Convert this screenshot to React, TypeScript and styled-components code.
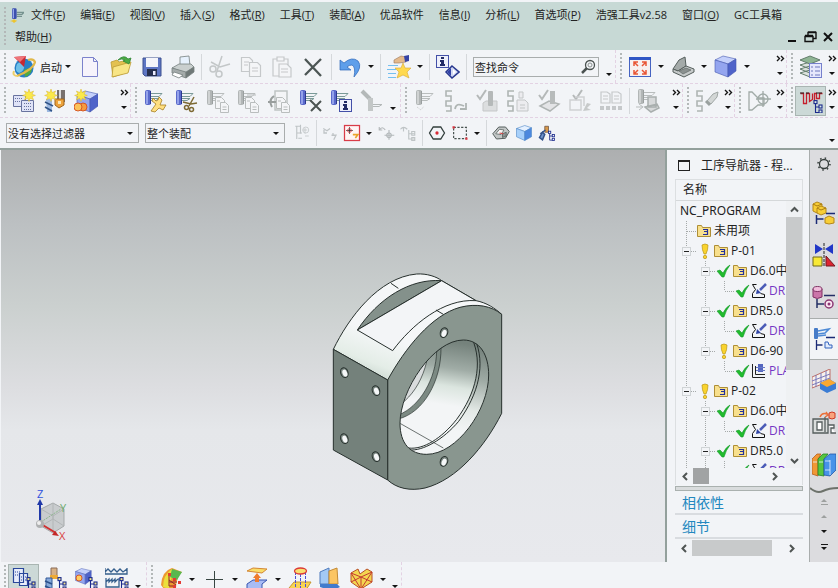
import React from "react";
import styled, { createGlobalStyle, css } from "styled-components";

const GlobalStyle = createGlobalStyle`
  * { box-sizing: border-box; }
  html, body { margin: 0; height: 100%; overflow: hidden; }
  body, button, input, select {
    font-family: "Open Sans", "Noto Sans CJK SC", sans-serif;
    font-size: 11px;
    color: #222;
  }
  button { border: 0; padding: 0; background: none; }
`;

/* ---------- Icon drawings (24 x 24 unless noted) ---------- */

const Burst = ({ x = 0, y = 0 }: { x?: number; y?: number }) => (
  <path
    transform={`translate(${x} ${y})`}
    d="M6 0l1.2 3.6L10.6 2 9 5.2l3.4 1.2L9 7.600l1.600 3.200-3.400-1.600L6 12.600 4.800 9.200 1.400 10.800 3 7.600-.4 6.400 3 5.200 1.400 2l3.400 1.600z"
    fill="#fbe94a"
    stroke="#d8b733"
    strokeWidth=".5"
  />
);

const NavTree = ({ x = 0, y = 0, c = "#1b2a8c", f = "#f6e58a" }: { x?: number; y?: number; c?: string; f?: string }) => (
  <g transform={`translate(${x} ${y})`} stroke={c} strokeWidth="1.1" fill={f}>
    <path d="M2.500 4v8.500H6M2.500 7H6" fill="none" />
    <rect x="1" y="0.600" width="3" height="3" />
    <rect x="6" y="5" width="3" height="3" />
    <rect x="6" y="10" width="3" height="3" />
  </g>
);

const Op = ({ grey, x = 0, y = 0 }: { grey?: boolean; x?: number; y?: number }) => (
  <g transform={`translate(${x} ${y})`}>
    <path d="M8 4.500h11l-3 3H8M8 9.500h8l-3 2H8" fill="none" stroke={grey ? "#b9bdbd" : "#7a9a98"} />
    <rect x="2" y="1" width="6" height="15" rx="2" fill={grey ? "#b2b6b6" : "#5a6acb"} />
    <path d="M4 2v13" stroke={grey ? "#d9dbdb" : "#a9b6f4"} strokeWidth="1.500" />
    <path d="M7.500 2v13" stroke={grey ? "#9a9f9f" : "#2c3890"} />
  </g>
);

const Sheets = ({ x = 0, y = 0, s = "#b9bdbd" }: { x?: number; y?: number; s?: string }) => (
  <g transform={`translate(${x} ${y})`} fill="#f4f5f7" stroke={s}>
    <path d="M.5.500h6l3 3v8h-9z" />
    <path d="M5.500 5.500h5l3 3v7h-8z" />
    <path d="M7.500 10h4M7.500 12.500h4M2 4h3" />
  </g>
);

const Scissors = ({ c, x = 0, y = 0 }: { c: string; x?: number; y?: number }) => (
  <g transform={`translate(${x} ${y})`} fill="none" stroke={c} strokeWidth="1.500">
    <path d="M11 0L6 9M0 5l8 2 6-1" />
    <circle cx="3.500" cy="10.500" r="2" />
    <circle cx="8.500" cy="12.500" r="2" />
  </g>
);

const Cross = ({ x = 0, y = 0, s = 12 }: { x?: number; y?: number; s?: number }) => (
  <path transform={`translate(${x} ${y})`} d={`M0 0L${s} ${s}M${s} 1L1 ${s}`} stroke="#4c5452" strokeWidth="2" />
);

const Serpent = () => <path d="M8 2H2v5h5v5H2v5h5v5H2" fill="none" stroke="#aeb5b3" strokeWidth="1.600" />;

const BlueCube = ({ x = 0, y = 0 }: { x?: number; y?: number }) => (
  <g transform={`translate(${x} ${y})`} stroke="#4457ae" strokeWidth=".6">
    <path d="M1 5l8-4 13 3-8 5z" fill="#c4d0fb" />
    <path d="M1 5l13 4v13L1 17z" fill="#94a5ef" />
    <path d="M14 9l8-5v12l-8 6z" fill="#4f63c9" />
  </g>
);

const Info = ({ x = 0, y = 0 }: { x?: number; y?: number }) => (
  <g transform={`translate(${x} ${y})`}>
    <rect x=".5" y=".5" width="12" height="12" fill="#eef0fb" stroke="#4350a8" />
    <path d="M5 2h3v2H5zM4 5h4v4h1v2H4V9h1V7H4z" fill="#222b66" />
  </g>
);

const Tick = ({ x = 0, y = 0 }: { x?: number; y?: number }) => (
  <path transform={`translate(${x} ${y})`} d="M1 5l3 4 6-9" stroke="#b5b9b9" strokeWidth="2" fill="none" />
);

const icons: Record<string, React.ReactNode> = {
  logo: (
    <g>
      <path d="M13 8h11l-3 3h-8M13 14h8" stroke="#75928f" strokeWidth="2" fill="none" />
      <rect x="6" y="2" width="7" height="16" rx="2" fill="#3c50ae" />
      <path d="M8 3v14" stroke="#96a6ea" strokeWidth="2" />
      <path d="M9 18l2 2 3 .5-2.500 1.500L9 24l-2-2-4-1 4-1z" fill="#eec52d" />
    </g>
  ),
  globe: (
    <g>
      <circle cx="12" cy="13" r="9.500" fill="#277fc5" />
      <path d="M5 9q6-5 7 1t-5 8q-5-2-2-9" fill="#6fc0e8" />
      <path d="M12 15q5-3 8-1-1 6-7 8z" fill="#54aa40" />
      <path d="M5 21Q22 14 23 7q-2-4-7-2" fill="none" stroke="#e0b84a" strokeWidth="2.200" />
      <path d="M2 16q-2 5 4 5" fill="none" stroke="#edcf68" strokeWidth="2" />
      <path d="M2 2l12-1-2 11z" fill="#c72832" />
      <path d="M2 2l12-1-6 6z" fill="#ef7479" />
    </g>
  ),
  fresh: <path d="M4.500 2.500h11l4 4v15h-15zM15.500 2.500v4h4" fill="#f6f3fb" stroke="#7c82cc" />,
  open: (
    <g stroke="#bb9a34" strokeWidth=".8">
      <path d="M2 7l6-2 2 2 9-2v12L4 22z" fill="#e3c150" />
      <path d="M4 12l18-5-3 11L3 22z" fill="#f8e586" />
      <path d="M9 5q6-6 10-1l3-1-2 6-6-3 2-1q-3-2-7 0" fill="#4cab45" stroke="#2e8533" />
    </g>
  ),
  save: (
    <g>
      <path d="M3 3h18v18H5l-2-2z" fill="#5e76c4" stroke="#3c508f" />
      <path d="M6 3h12v9H6z" fill="#f4f5fb" />
      <path d="M7 14h10v7H7z" fill="#27304e" />
      <path d="M13 16h2.500v4H13z" fill="#eef" />
    </g>
  ),
  print: (
    <g stroke="#76807f" strokeWidth=".8">
      <path d="M9 2l9-1 1 10-10 2z" fill="#e7f2fd" />
      <path d="M1 13l7-4h12l3 3-8 6z" fill="#c9cfce" />
      <path d="M1 13l14 4v6L1 18z" fill="#a4abaa" />
      <path d="M15 17l8-5v5l-8 6z" fill="#6f7877" />
      <path d="M3 17l9 3-4 3-7-3z" fill="#fff" />
    </g>
  ),
  cut: (
    <g fill="none" stroke="#c3c7c8" strokeWidth="1.500">
      <path d="M14 1l-4 12-1 3M3 7l9 5 10-3" />
      <circle cx="5" cy="14" r="3" />
      <circle cx="11" cy="19" r="3" />
    </g>
  ),
  copy: (
    <g fill="#f4f5f7" stroke="#c5c8ca" strokeWidth="1.200">
      <path d="M2.500 2.500h8l3 3v11h-11z" />
      <path d="M10.500 7.500h8l3 3v11h-11zM13 13h6M13 16h6M5 7h5M5 10h4" />
    </g>
  ),
  paste: (
    <g fill="#f4f5f7" stroke="#c5c8ca" strokeWidth="1.200">
      <path d="M3 4h15v17H3z" />
      <path d="M7 2h7v4H7zM9 9h8l4 4v9H9zM11 14h7M11 17h7" />
    </g>
  ),
  remove: <path d="M4 4l16 17M20 4L4 20" stroke="#4c5654" strokeWidth="2.300" />,
  undo: (
    <path d="M2 15V5l4 3q8-7 14-2 5 6-4 16 2-10-2-12-3 0-5 2l4 3z" fill="#5f9fea" stroke="#2c66b8" strokeWidth=".7" />
  ),
  starHand: (
    <g>
      <path d="M1 10.500h10M0 14.500h9M1 18.500h8M1 22.500h8" stroke="#75bff0" />
      <path d="M7 5l7-4 5 1v5l-7 1-5 0z" fill="#e4ba8c" stroke="#9b765a" strokeWidth=".6" />
      <path d="M17 1l5-1v6l-4 1z" fill="#3744a5" />
      <path d="M16 8l2 5 6 0-4 4 2 6-6-3-6 3 2-6-4-4h6z" fill="#ffd94f" stroke="#d8a832" strokeWidth=".6" />
    </g>
  ),
  command: (
    <g>
      <Info />
      <path d="M16 11l7 6-7 6-6-6z" fill="#d1d8f3" stroke="#27378e" strokeWidth="1.500" />
      <path d="M15 13v8l-4-4z" fill="#3142a6" />
      <path d="M17 14v6l3-3z" fill="#fff" />
    </g>
  ),
  fit: (
    <g>
      <rect x="1.500" y="2.500" width="21" height="19" fill="#f7f0ef" stroke="#4563c1" />
      <path d="M1 2h22v3H1z" fill="#3157c5" />
      <path d="M10 11L6 7m0 4V7h4M14 11l4-4m-4 0h4v4M10 15l-4 4m0-4v4h4M14 15l4 4m-4 0h4v-4" stroke="#e95535" fill="none" strokeWidth="1.500" />
    </g>
  ),
  shell: (
    <g stroke="#555e5c">
      <path d="M2 14L8 5l6-3 1 9-8 5z" fill="#a4aaa9" />
      <path d="M2 14l5 2 8-5 8 3v3l-10 5-11-5z" fill="#c6caca" />
      <path d="M8 16l7-3 5 2-8 4z" fill="#8b9190" strokeWidth=".6" />
    </g>
  ),
  cube: <BlueCube />,
  layers: (
    <g stroke="#637d6c">
      <path d="M1 18l10-3 10 3-10 4zM1 14l10-3 10 3-10 4zM1 10l10-3 10 3-10 4z" fill="#dce2dd" />
      <path d="M1 5l10-4 10 4-10 4z" fill="#8fb594" />
      <rect x="10.500" y="8.500" width="12" height="14" fill="#e5e7fc" stroke="#7580cc" />
      <path d="M12 12h2m2 0h5m-9 4h2m2 0h5m-9 4h2m2 0h5" stroke="#6c76bd" />
    </g>
  ),
  newProgram: (
    <g fill="#dfe3f7" stroke="#68739f">
      <path d="M1.500 6.500h12v11h-12z" />
      <path d="M9.500 11.500h12v11h-12z" />
      <path d="M3 9.500h8M3 12.500h5M12 14.500h8M12 17.500h8M12 20.500h8" strokeDasharray="1 1" />
      <Burst x={11} y={0} />
    </g>
  ),
  newTool: (
    <g>
      <path d="M14 1h8v12h-8z" fill="#77706d" />
      <path d="M16 1h2v12h-2z" fill="#ddd" />
      <path d="M12 10h9v6l-5 3-4-3z" fill="#eca23b" stroke="#9f651c" />
      <path d="M15 12h3v3h-3z" fill="#fbe6b5" />
      <path d="M3 10h6v13H4z" fill="#9cb8e0" />
      <path d="M2 13l8 4M2 18l7 4" stroke="#325487" strokeWidth="1.500" />
      <Burst x={2} />
    </g>
  ),
  newGeometry: (
    <g>
      <BlueCube y={1} x={2} />
      <circle cx="9" cy="18" r="4" fill="#f59c40" stroke="#d65827" />
      <circle cx="4" cy="18" r="4" fill="#fbc35a" stroke="#d65827" />
      <Burst x={1} />
    </g>
  ),
  opEdit: <g><Op /><path d="M10 9l3 3 2-1 1-3 3 3-2 5 6 0-3 5-4-2-4 4-4-1 5-7-4-3z" fill="#ffdf81" stroke="#a67d22" strokeWidth=".8" /></g>,
  opCut: <g><Op /><Scissors c="#7d6a34" x={9} y={8} /></g>,
  opCopy: <g><Op grey /><Sheets x={10} y={8} /></g>,
  opCopy2: <g><Op grey /><Sheets x={9} y={8} /><path d="M11 6h9" stroke="#b9bdbd" /></g>,
  opPaste: <g><path d="M8 2h12v19H8z" fill="#f4f5f7" stroke="#bfc3c4" strokeWidth="1.500" /><Sheets x={9} y={8} /><path d="M7 7q-6 4-2 11m-4-5h8" stroke="#999e9d" strokeWidth="2" fill="none" /></g>,
  opDelete: <g><Op /><Cross x={12} y={11} s={11} /></g>,
  opInfo: <g><Op /><Info x={10} y={10} /></g>,
  opFind: <g><path d="M2 2l8 8" stroke="#b3b8b8" strokeWidth="4" /><rect x="8" y="9" width="5" height="13" fill="#c3c7c7" /><path d="M13 15.500h9l-3 2h-6" stroke="#b3b8b8" fill="none" /></g>,
  generate: <g><Op grey x={1} /><path d="M4 18l4 3 3-4" fill="none" stroke="#c8caca" strokeDasharray="1 1" /></g>,
  replay: <g><Serpent /><path d="M11 20q1-7 9-3m2-3v6h-6" fill="none" stroke="#aeb5b3" strokeWidth="1.800" /></g>,
  verify: <g><Tick x={1} y={1} /><path d="M8 14l3-2h11v10H8z" fill="#dcdedf" stroke="#c5c7c8" /><rect x="13" y="2" width="5" height="15" rx="1" fill="#b5b9b9" /></g>,
  post: <g><Serpent /><path d="M13 3h4v6h-4zM11 11h8l3 3v8H11z" fill="#ececef" stroke="#c3c6c7" /><path d="M14 16h5m-5 3h5" stroke="#c3c6c7" /></g>,
  machine: <g><Tick x={1} y={1} /><path d="M3 17l9-5 10 3-9 7z" fill="#e3e4e6" stroke="#b0b5b4" strokeWidth="1.500" /><path d="M13 2h5v13h-5z" fill="#b7bbbb" /></g>,
  shop: <g><Tick x={4} y={1} /><path d="M2 11h11v10H2zM7 8h9v9" fill="none" stroke="#cfd1d3" strokeWidth="1.500" /><path d="M15 22l4-8 4 1-4 4 4 2z" fill="#c7caca" /></g>,
  batch: <g fill="none" stroke="#c5c8ca"><path d="M2 3h6l3 2v9H2zM13 3h6l3 2v9h-9zM4 7h5m-5 3h5m6-3h5m-5 3h5" strokeWidth="1.200" /><path d="M1 19h22" strokeWidth="4" strokeDasharray="4 2" /></g>,
  simulate: <g><Op grey y={-1} /><path d="M12 8h8v10h-8zM9 18l12-3 2 4-8 4z" fill="#d7d9da" stroke="#a9afae" strokeWidth="1.500" /><path d="M0 18h6m-3-3l4 3-4 3" fill="none" stroke="#b9bdbd" /></g>,
  flashlight: <g><Serpent /><path d="M12 12l6-7 5-2-1 5-6 7z" fill="#d3d7d6" stroke="#a0a7a5" /><path d="M11 12l4 4" stroke="#9aa19f" strokeWidth="3" /></g>,
  turning: <g fill="none" stroke="#a0aaa7" strokeWidth="1.300"><path d="M2 3h3l6 6h6v7h-6l-6 5H2z" /><circle cx="16" cy="10" r="5" /><path d="M16 2v16M9 10h15" /></g>,
  order: <g><path d="M1.500 4.500h3v10h3v-10h3v8l3-2v-6M15.500 14V4.500h2v5h3v-5h3" fill="none" stroke="#c51f2c" strokeWidth="1.300" /><path d="M1 4h4M7 4h3M17 4h6" stroke="#222" /><NavTree x={14} y={11} f="#d8ebe6" /></g>,
  snapGrey: <g fill="none" stroke="#bfc4c6"><path d="M3 3h7M5 3v17m0-8h7M10 1v12M7 19h5" strokeWidth="1.500" /><path d="M13 8h6M16 5v8m0 3h5" /><circle cx="17" cy="8" r="4" /></g>,
  snapBack: <g fill="none" stroke="#bfc4c6" strokeWidth="1.700"><path d="M4 8v4h4M3 6l5 3 4-3M14 15h6l-3 6M16 12v4" /></g>,
  snapBox: <g><rect x="3" y="3" width="18" height="18" fill="#fff5f4" stroke="#d93c48" strokeWidth="1.500" /><path d="M9 5v8M5 9h8" stroke="#333" /><circle cx="9" cy="9" r="2.300" fill="none" stroke="#d93c48" /><path d="M13 14h6l-3 4" fill="none" stroke="#eaa42a" strokeWidth="2" /></g>,
  moveGrey: <g fill="none" stroke="#b3b8ba" strokeWidth="1.500"><path d="M3 8q4-6 8 0m-8-4v4h4M16 8v13m-6-6h13" /><circle cx="16" cy="15" r="3" /></g>,
  treeGrey: <g fill="none" stroke="#bfc4c6" strokeWidth="1.500"><path d="M2 7q4-5 9 0M6 4v6M13 8v12h8m-8-7h8" /><path d="M17 10h4v5h-4zM17 18h4v4h-4z" /></g>,
  hex: <g><path d="M7 4h10l5 8-5 8H7l-5-8z" fill="none" stroke="#333f3d" strokeWidth="1.700" /><circle cx="12" cy="12" r="2.200" fill="#d92b35" /></g>,
  marquee: <g><rect x="3.500" y="4.500" width="17" height="15" fill="none" stroke="#46514e" strokeWidth="1.600" strokeDasharray="3 2" /><path d="M2 3h3v3H2zM19 18h3v3h-3z" fill="#dc3440" /></g>,
  wirebody: <g stroke="#535d5b"><path d="M1 13L9 4h9l5 6-5 9-12 1z" fill="#c2c6c6" strokeWidth="1.300" /><path d="M5 13l5-6 6 1-4 6z" fill="#f7f7f7" /><path d="M14 13l5-2v5l-5 2z" fill="#8e9594" /><path d="M10 12l5 1" stroke="#d34548" strokeWidth="1.500" /></g>,
  iceCube: <g stroke="#4d86c6" strokeWidth=".8"><path d="M2 6l11-4 9 3-9 5z" fill="#e4f0ff" /><path d="M2 6l11 4v12L2 17z" fill="#a7d0fa" /><path d="M13 10l9-5v12l-9 5z" fill="#4c88de" /></g>,
  toolTree: <g><path d="M9 3h5v8H9z" fill="#d7984b" stroke="#6a5140" /><path d="M3 13l7-5M2 18l4-7 3 3-3 7z" stroke="#31518a" strokeWidth="2" fill="#7094cc" /><NavTree x={13} y={9} f="#eef0fa" /></g>,
  progView: <g fill="#e8edfb" stroke="#29479b" strokeWidth="1.200"><path d="M1.500 1.500h10v14h-10zM7.500 6.500h8v12h-8z" /><path d="M3 5h5M3 8h3M9 10h5m-5 3h5" strokeDasharray="1 1" /><NavTree x={14} y={10} /></g>,
  toolView: <g><path d="M8 1h6v8H8z" fill="#d8b184" stroke="#8a6c58" /><path d="M7 8h8v4H7z" fill="#edaa36" /><path d="M3 11h6v12H3z" fill="#86a9da" stroke="#355b98" /><path d="M2 14l7 3m-7 2l7 3" stroke="#2c508b" strokeWidth="1.500" /><NavTree x={14} y={10} /></g>,
  geomView: <g><g transform="scale(.750)"><BlueCube x={1} y={1} /></g><circle cx="5" cy="11" r="3" fill="#ffcc60" stroke="#d65827" /><NavTree x={14} y={10} /></g>,
  methodView: <g fill="none" stroke="#355f8c" strokeWidth="1.300"><path d="M0 1v6h22V1M0 5l3-3 3 3 3-3 3 3 3-3 3 3 4-3M1 11v9h13v-9M1 15l3-3v3l3-3v3l3-3v3l3-3" /><NavTree x={14} y={10} /></g>,
  heat: <g><path d="M2 18Q3 4 13 1l10 4q-6 5-6 17H5z" fill="#ed9a31" /><path d="M4 20Q4 8 13 2l4 3q-6 5-7 17z" fill="#ebdf3c" /><path d="M13 2l10 3-5 8-7-3z" fill="#59b84e" /><path d="M10 8v11h5m-5-6l7 5m-7-3h8" stroke="#8e242d" fill="none" /><path d="M9 6h3v3H9zM14 11h3v3h-3zM14 18h3v3h-3zM19 14h3v3h-3z" fill="#e43b35" /></g>,
  plus: <path d="M12.500 4v17M4 12.500h17" stroke="#384642" />,
  extrude: <g><path d="M2 4l6-3 14 1-5 4z" fill="#f9dd68" stroke="#d48734" /><path d="M2 17l6-4h14l-5 4v6H2z" fill="#a9bcf4" stroke="#3755b0" /><path d="M12 6l4 5h-2v4h-4v-4H8z" fill="#ee7b2e" /></g>,
  cylinder: <g><path d="M1 21l5-6h17l-5 8H1z" fill="#f8d452" stroke="#c79731" /><path d="M7.500 5v15m10-15v15m-5-13v15" stroke="#4c4ed4" strokeDasharray="3 1" /><ellipse cx="12.500" cy="4" rx="6" ry="3" fill="#f9e070" stroke="#dc3a35" strokeWidth="1.300" /></g>,
  splitCube: <g><path d="M1 5l9-4v16H1z" fill="#a3c9f4" stroke="#4f7bbd" /><path d="M10 4l8-3 1 16h-9z" fill="#fbc563" stroke="#c38a35" /><path d="M1 17l17 0 3 3-8 4-12-4z" fill="#427bcd" /></g>,
  mesh: <g fill="#f3d650" stroke="#b85026"><path d="M1 6l7-4 2 5 7-5 5 3v10l-11 7-10-7z" /><path d="M1 6l10 4L22 5M11 10v12M1 6l10 16L22 5M1 15l10-5 11 5" stroke="#c43931" fill="none" /></g>,
  gear: <g fill="none" stroke="#343c3a"><circle cx="12" cy="12" r="6" strokeWidth="1.700" /><circle cx="12" cy="12" r="8" strokeWidth="2" strokeDasharray="2 4.280" /></g>,
  assembly: <g><path d="M1 3l4-2 5 2v7l-5 2-4-2z" fill="#f8ce37" stroke="#b48719" /><path d="M5 7l4-2 5 2v5l-5 2-4-2z" fill="#f8ce37" stroke="#b48719" /><path d="M1 3l4 2 5-2M5 7l4 2 5-2" fill="none" stroke="#a87b15" /><path d="M4.500 14v9m0-5h7M14 12.500h9" stroke="#1b2b76" strokeWidth="1.500" /><path d="M13 17l4-2 5 2v5l-5 1-4-1z" fill="#f8ce37" stroke="#b48719" /></g>,
  constraint: <g><path d="M3 1l8 5-8 5zM21 1l-8 5 8 5z" fill="#2137c7" /><path d="M12 0v24" stroke="#222" strokeDasharray="3 1" /><path d="M1 14h9v9H1z" fill="#f8e936" stroke="#6e681c" /><path d="M14 13l9 10h-9z" fill="#dd2530" stroke="#751820" /></g>,
  part: <g><path d="M1 4v8q4 3 9 0V4" fill="#cb75a9" stroke="#7e3163" /><ellipse cx="5.500" cy="4" rx="4.500" ry="2.500" fill="#f1bddc" stroke="#7e3163" /><path d="M5 14v9m0-4h7M12 10.500h11" stroke="#252f66" strokeWidth="1.500" /><circle cx="17" cy="19" r="4" fill="#fce8f4" stroke="#8c3773" strokeWidth="1.500" /><circle cx="17" cy="19" r="1.500" fill="#8c3773" /></g>,
  operation: <g><rect x="2" y="1" width="4" height="11" rx="1" fill="#457bc8" /><path d="M6 4l11-2-4 4-7 1m0 2l8-1" stroke="#4e8ad6" strokeWidth="1.600" fill="none" /><path d="M4.500 13v10m0-5h6M14 10.500h9" stroke="#1b2b76" strokeWidth="1.300" /><path d="M13 21v-6h3l1 3h3v3z" fill="#e2ecfc" stroke="#3262bd" /></g>,
  gridBox: <g><path d="M0 8L18 0v12L0 19z" fill="#f7f1ed" stroke="#bd6e68" /><path d="M4 6v12M9 4v12M14 2v12M0 12l18-7M0 16l18-7" stroke="#7978ba" fill="none" /><path d="M8 14l9-4 7 4v6l-9 4-7-4z" fill="#3a7cd4" /><path d="M8 14l9-4 7 4-9 4z" fill="#f9a830" /></g>,
  mill: <g stroke="#555e5d"><path d="M1 8h15v14H1z" fill="#dadddc" strokeWidth="1.300" /><path d="M5 11h5v8H5zM13 6v15M16 14h6v3h-3v5h5" fill="#fff" strokeWidth="1.300" /><path d="M8 6q2-5 7-3m-1-2l2 3-3 2" fill="none" stroke="#eb713a" strokeWidth="1.500" /><path d="M17 2l3-1 3 1v5l-3 1-3-1z" fill="#f9a37d" stroke="#ce3823" /></g>,
  books: <g strokeWidth=".8"><path d="M0 6l5-5h4L6 6v17l-6-2z" fill="#f19835" stroke="#b65d1d" /><path d="M6 6l5-5h5l-4 5v17l-6-1z" fill="#57c63e" stroke="#258328" /><path d="M12 6l6-5h6v16l-6 6-6-1z" fill="#4793e8" stroke="#2358a9" /><path d="M13 8h5m-5 9h5M18 7v15M7 9h4M1 9h4" stroke="#eaf4ff" /></g>,
};

const Svg = styled.svg<{ $size: number }>`
  width: ${(p) => p.$size}px;
  height: ${(p) => p.$size}px;
  flex: none;
  display: block;
`;

const Icon = ({ name, size = 24 }: { name: string; size?: number }) => (
  <Svg viewBox="0 0 24 24" $size={size} aria-hidden="true">
    {icons[name]}
  </Svg>
);

/* ---------- Layout ---------- */

const Page = styled.div`
  height: 100vh;
  display: flex;
  flex-direction: column;
  background: #f2f4f7;
`;

const MenuBar = styled.nav`
  display: flex;
  border-top: 2px solid #f2f4f7;
  padding-top: 2px;
  height: 50px;
  flex: none;
  background: #c7d9d5;
`;

const Grip = styled.span`
  width: 8px;
  align-self: stretch;
  flex: none;
  margin: 3px 0;
  background: repeating-linear-gradient(#b3b8b8 0 2px, transparent 2px 4px) 4px 0 / 2px 100% no-repeat;
`;

const MenuItems = styled.div`
  flex: 1;
  display: flex;
  flex-wrap: wrap;
  align-content: flex-start;
  column-gap: 1px;
`;

const MenuItem = styled.button`
  height: 22px;
  padding: 0 7px;
  line-height: 20px;
  white-space: nowrap;
`;

const MenuIcon = styled.span`
  width: 15px;
  display: flex;
  align-items: center;
`;

const MenuLine = styled.div`
  flex: 0 0 100%;
  display: flex;
  align-items: center;
`;

const WindowControls = styled.div`
  margin-left: auto;
  display: flex;
  gap: 2px;
  padding-right: 2px;
`;

const WindowButton = styled.button`
  width: 16px;
  height: 18px;
  display: flex;
  align-items: center;
  justify-content: center;
`;

const ToolRow = styled.div<{ $last?: boolean }>`
  display: flex;
  flex: none;
  height: ${(p) => (p.$last ? 32 : 34)}px;
  border-bottom: ${(p) => (p.$last ? "2px solid #93a09c" : "1px dashed #e3d2e3")};
`;

const Group = styled.div<{ $grow?: boolean; $min?: number; $end?: boolean }>`
  display: flex;
  align-items: center;
  flex: ${(p) => (p.$grow ? 1 : "none")};
  min-width: ${(p) => p.$min ?? 0}px;
  border-right: ${(p) => (p.$end ? "0" : "1px dashed #e3d2e3")};
`;

const Tool = styled.button<{ $w?: number; $active?: boolean }>`
  width: ${(p) => p.$w ?? 31}px;
  height: 30px;
  flex: none;
  display: flex;
  align-items: center;
  justify-content: center;
  ${(p) =>
    p.$active &&
    css`
      background: #ccd9d7;
      border: 1px solid #a9b5b2;
    `}
`;

const StartTool = styled.button`
  display: flex;
  align-items: center;
  height: 30px;
  padding-left: 4px;
  gap: 4px;
`;

const Arrow = styled.button<{ $low?: boolean }>`
  width: 12px;
  height: 30px;
  flex: none;
  display: flex;
  justify-content: center;
  align-items: ${(p) => (p.$low ? "flex-end" : "center")};
  padding-bottom: ${(p) => (p.$low ? 6 : 0)}px;
`;

const Triangle = styled.i<{ $up?: boolean; $faint?: boolean }>`
  border: 3px solid transparent;
  border-width: ${(p) => (p.$up ? "0 3px 3px" : "3px 3px 0")};
  border-top-color: ${(p) => (p.$up ? "transparent" : "#151515")};
  border-bottom-color: ${(p) => (p.$faint ? "#9da09f" : "#151515")};
`;

const Overflow = styled.button`
  width: 12px;
  height: 30px;
  margin-left: auto;
  flex: none;
  display: flex;
  flex-direction: column;
  align-items: center;
  justify-content: space-between;
  padding: 3px 0 7px;
`;

const Separator = styled.span`
  width: 6px;
  height: 26px;
  flex: none;
  background: linear-gradient(#d5d8db, #d5d8db) center / 1px 100% no-repeat;
`;

const Spacer = styled.span`
  width: 6px;
  flex: none;
`;

const SearchBox = styled.label`
  width: 126px;
  height: 20px;
  margin: 0 4px;
  flex: none;
  display: flex;
  align-items: center;
  border: 1px solid #a9adad;
  padding-right: 2px;
`;

const SearchInput = styled.input`
  flex: 1;
  min-width: 0;
  border: 0;
  background: none;
  padding: 0 1px;
  outline: 0;
`;

const FilterBox = styled.label<{ $w: number }>`
  width: ${(p) => p.$w}px;
  height: 20px;
  margin-left: 6px;
  display: flex;
  align-items: center;
  border: 1px solid #a9adad;
  padding-right: 5px;
`;

const FilterSelect = styled.select`
  appearance: none;
  flex: 1;
  min-width: 0;
  border: 0;
  background: none;
  padding: 0 1px;
  outline: 0;
`;

const Workspace = styled.main`
  flex: 1;
  min-height: 0;
  display: grid;
  grid-template-rows: minmax(0, 1fr);
  grid-template-columns: minmax(0, 1fr) 145px 28px;
`;

const Viewport = styled.section`
  position: relative;
  overflow: hidden;
  border-left: 1px solid #f2f4f7;
  background: linear-gradient(#adafb0, #bcc0c2 18%, #cbd0cf 38%, #dcdde0 57%, #e5e7ea 68%, #e8e9ed);
`;

const ModelSvg = styled.svg`
  position: absolute;
  left: 309px;
  top: 110px;
  width: 210px;
  height: 240px;
`;

const TriadSvg = styled.svg`
  position: absolute;
  left: 29px;
  bottom: 20px;
  width: 42px;
  height: 54px;
  font-size: 11px;
`;

const Navigator = styled.aside`
  border-left: 2px solid #93a09c;
  padding: 0 7px 0 8px;
  display: flex;
  flex-direction: column;
  font-size: 12px;
  min-width: 0;
`;

const NavTitle = styled.h2`
  margin: 0;
  height: 29px;
  flex: none;
  display: flex;
  align-items: center;
  gap: 11px;
  padding: 1px 0 0 3px;
  font-size: 12px;
  font-weight: 400;
  white-space: nowrap;
`;

const DockBox = styled.i`
  width: 12px;
  height: 11px;
  border: 1px solid #222;
  border-top-width: 2px;
`;

const TreePane = styled.div`
  flex: 1;
  min-height: 0;
  border: 1px solid #dcdfe1;
  border-bottom: 0;
  display: flex;
  flex-direction: column;
`;

const ColumnHead = styled.div`
  height: 21px;
  flex: none;
  padding-left: 7px;
  line-height: 20px;
  border-bottom: 1px solid #d5d8da;
`;

const TreeBody = styled.div`
  flex: 1;
  min-height: 0;
  display: grid;
  grid-template-rows: minmax(0, 1fr);
  grid-template-columns: minmax(0, 1fr) 16px;
`;

const TreeList = styled.ul`
  list-style: none;
  margin: 0;
  padding: 0 0 0 1px;
  overflow: hidden;
`;

const TreeRow = styled.li<{ $leaf?: boolean }>`
  display: flex;
  align-items: center;
  height: 20px;
  line-height: 20px;
  white-space: nowrap;
  color: ${(p) => (p.$leaf ? "#7637c4" : "#222")};
`;

const RootLabel = styled.span`
  padding-left: 3px;
  font-family: "Noto Sans", sans-serif;
`;

const Guide = styled.span<{ $line?: boolean; $elbow?: boolean }>`
  width: 19px;
  height: 20px;
  flex: none;
  display: flex;
  align-items: center;
  justify-content: center;
  background-repeat: no-repeat;
  background-image: ${(p) => (p.$line || p.$elbow ? "repeating-linear-gradient(#a5a9a9 0 1px, transparent 1px 2px)" : "none")},
    ${(p) => (p.$elbow ? "repeating-linear-gradient(90deg, #a5a9a9 0 1px, transparent 1px 2px)" : "none")};
  background-size: 1px ${(p) => (p.$line ? "100%" : "50%")}, 9px 1px;
  background-position: 9px 0, 10px 10px;
`;

const Expander = styled.button`
  width: 9px;
  height: 9px;
  border: 1px solid #d0d4d6;
  background: linear-gradient(#222, #222) center / 5px 1px no-repeat #f2f4f7;
`;

const StatusSvg = styled.svg`
  width: 17px;
  height: 18px;
  flex: none;
`;

const NodeSvg = styled.svg`
  width: 16px;
  height: 16px;
  flex: none;
  margin-right: 2px;
`;

const ScrollV = styled.div`
  display: flex;
  flex-direction: column;
  background: #eff1f3;
`;

const ScrollH = styled.div`
  display: flex;
  flex: none;
  height: 17px;
  padding: 0 4px 1px 1px;
`;

const ScrollButton = styled.button`
  width: 16px;
  height: 16px;
  flex: none;
  display: flex;
  align-items: center;
  justify-content: center;
`;

const Track = styled.div<{ $column?: boolean }>`
  flex: 1;
  display: flex;
  min-height: 0;
  flex-direction: ${(p) => (p.$column ? "column" : "row")};
`;

const Thumb = styled.i<{ $part: number; $dark?: boolean }>`
  flex: 0 0 ${(p) => p.$part}%;
  background: ${(p) => (p.$dark ? "#a1a3a4" : "#c8cacb")};
`;

const Splitter = styled.div`
  height: 5px;
  margin-top: 1px;
  flex: none;
  border: 1px solid #aab1af;
  background: #d9dcdd;
`;

const Fold = styled.button`
  height: 24px;
  flex: none;
  padding: 2px 0 0 7px;
  text-align: left;
  line-height: 20px;
  font-size: 14px;
  color: #2388bf;
  border-bottom: 2px solid #d9dce0;
`;

const NavBottom = styled.div`
  flex: none;
  height: 23px;
  padding-top: 1px;
`;

const Rail = styled.div`
  display: flex;
  flex-direction: column;
  background: #dcdcdf;
  border-left: 1px solid #a9adad;
  margin-left: -1px;
  min-height: 0;
  overflow: hidden;
`;

const RailTab = styled.button<{ $active?: boolean; $top?: boolean }>`
  height: ${(p) => (p.$top ? 28 : 42)}px;
  flex: none;
  display: flex;
  align-items: center;
  justify-content: center;
  margin-bottom: ${(p) => (p.$top ? 14 : 0)}px;
  ${(p) =>
    p.$active &&
    css`
      background: #f2f4f7;
      border: solid #a9adad;
      border-width: 1px 0;
      margin-left: -1px;
    `}
`;

const RailWave = styled.svg`
  width: 28px;
  height: 8px;
  flex: none;
`;

const RailArrow = styled.button<{ $bar?: "top" | "bottom" }>`
  height: 15px;
  flex: none;
  display: flex;
  flex-direction: ${(p) => (p.$bar === "top" ? "column-reverse" : "column")};
  align-items: center;
  justify-content: center;
  gap: 2px;
`;

const Bar = styled.i<{ $faint?: boolean }>`
  width: 7px;
  height: 1px;
  background: ${(p) => (p.$faint ? "#9da09f" : "#151515")};
`;

const BottomBar = styled.footer`
  height: 26px;
  flex: none;
  overflow: hidden;
  display: flex;
  align-items: flex-start;
`;

const BottomGroup = styled(Group)`
  height: 34px;
`;

/* ---------- Parts ---------- */

const Drop = ({ label, low }: { label: string; low?: boolean }) => (
  <Arrow aria-label={label} $low={low}>
    <Triangle />
  </Arrow>
);

const More = () => (
  <Overflow aria-label="更多">
    <svg width="9" height="7" viewBox="0 0 9 7" aria-hidden="true">
      <path d="M1 1l2.500 2.500L1 6M5 1l2.500 2.500L5 6" fill="none" stroke="#151515" strokeWidth="1.400" />
    </svg>
    <Triangle />
  </Overflow>
);

const ToolIcon = ({ name, label, w, active }: { name: string; label: string; w?: number; active?: boolean }) => (
  <Tool aria-label={label} $w={w} $active={active}>
    <Icon name={name} size={w ? 18 : 24} />
  </Tool>
);

const Chevron = ({ d }: { d: string }) => (
  <svg width="9" height="9" viewBox="0 0 9 9" aria-hidden="true">
    <path d={d} fill="none" stroke="#505554" strokeWidth="2" />
  </svg>
);

const menus: [string, string?][] = [
  ["文件", "F"], ["编辑", "E"], ["视图", "V"], ["插入", "S"], ["格式", "R"], ["工具", "T"], ["装配", "A"],
  ["优品软件"], ["信息", "I"], ["分析", "L"], ["首选项", "P"], ["浩强工具v2.58"], ["窗口", "O"], ["GC工具箱"],
];

const Menu = ({ text, hotkey }: { text: string; hotkey?: string }) => (
  <MenuItem>
    {text}
    {hotkey && <>(<u>{hotkey}</u>)</>}
  </MenuItem>
);

const Status = ({ kind }: { kind: "ok" | "warn" }) => (
  <StatusSvg viewBox="0 0 17 18" aria-hidden="true">
    {kind === "ok" ? (
      <path d="M2 9l3-1 3 3q3-6 7-8-4 5-6 12l-2 0z" fill="#20bb2c" stroke="#13982a" strokeWidth=".6" />
    ) : (
      <g fill="#f9d32d" stroke="#b99517" strokeWidth=".7">
        <path d="M6 3q3-2 6 0 0 5-2 9H8Q6 8 6 3z" />
        <circle cx="9" cy="15" r="1.700" />
      </g>
    )}
  </StatusSvg>
);

const NodeIcon = ({ kind }: { kind: "folder" | "drill" | "plane" }) => (
  <NodeSvg viewBox="0 0 16 16" aria-hidden="true">
    {kind === "folder" && (
      <g>
        <path d="M1.500 2.500h4l1 2h8v9h-13z" fill="#f8e08d" stroke="#ae8e35" />
        <path d="M7 6.500h4.500v2H8m3.500 0v3H7" fill="none" stroke="#24319b" strokeWidth="1.200" />
      </g>
    )}
    {kind === "drill" && (
      <g>
        <path d="M1.500 1.500h4M1.500 1.500l3 5-3 4v4h12v-3l-4-1" fill="none" stroke="#111" />
        <path d="M15 1L9 7" stroke="#4b5bb7" strokeWidth="2.500" />
        <path d="M5 11l1-5 4 4z" fill="#3045a6" />
      </g>
    )}
    {kind === "plane" && (
      <g>
        <path d="M1.500 1v13.500H14M4.500 3v8.500H14" fill="none" stroke="#222" />
        <path d="M7 1h5v8H7z" fill="#5365be" />
        <path d="M5 4.500h9M5 7.500h9" stroke="#6679c8" />
      </g>
    )}
  </NodeSvg>
);

type Node = { level: number; text: string; status?: "ok" | "warn"; icon: "folder" | "drill" | "plane"; last?: boolean };

const nodes: Node[] = [
  { level: 0, text: "未用项", icon: "folder" },
  { level: 1, text: "P-01", status: "warn", icon: "folder" },
  { level: 2, text: "D6.0中", status: "ok", icon: "folder" },
  { level: 3, text: "DR", status: "ok", icon: "drill" },
  { level: 2, text: "DR5.0", status: "ok", icon: "folder" },
  { level: 3, text: "DR", status: "ok", icon: "drill" },
  { level: 2, text: "D6-90", status: "warn", icon: "folder" },
  { level: 3, text: "PLA", status: "ok", icon: "plane", last: true },
  { level: 1, text: "P-02", status: "warn", icon: "folder" },
  { level: 2, text: "D6.0中", status: "ok", icon: "folder" },
  { level: 3, text: "DR", status: "ok", icon: "drill" },
  { level: 2, text: "DR5.0", status: "ok", icon: "folder" },
  { level: 3, text: "DR", status: "ok", icon: "drill" },
];

const TreeNode = ({ node }: { node: Node }) => (
  <TreeRow $leaf={node.level === 3}>
    {node.level === 0 && <Guide $line $elbow />}
    {node.level > 1 && <Guide $line />}
    {node.level === 3 && <Guide $line={!node.last} />}
    {(node.level === 1 || node.level === 2) && (
      <Guide $line $elbow>
        <Expander aria-label={`折叠 ${node.text}`} />
      </Guide>
    )}
    {node.level === 3 && <Guide $elbow />}
    {node.status && <Status kind={node.status} />}
    <NodeIcon kind={node.icon} />
    {node.text}
  </TreeRow>
);

const holes = [[402, 218], [402, 604], [103, 338], [198, 392], [103, 536], [198, 590]];

const Model = () => (
  <ModelSvg viewBox="0 0 630 720" role="img" aria-label="零件模型">
    <defs>
      <linearGradient id="band" x1=".7" y1="0" x2=".1" y2="1">
        <stop offset="0.6" stopColor="#f5f7f8" />
        <stop offset="0.82" stopColor="#e4ede7" />
        <stop offset="1" stopColor="#bccbc3" />
      </linearGradient>
      <linearGradient id="bore" gradientUnits="userSpaceOnUse" x1="430" y1="245" x2="380" y2="560">
        <stop offset="0" stopColor="#75827c" />
        <stop offset=".25" stopColor="#a0aca6" />
        <stop offset=".42" stopColor="#dbe5df" />
        <stop offset=".6" stopColor="#f3f5f6" />
      </linearGradient>
      <linearGradient id="lip" gradientUnits="userSpaceOnUse" x1="520" y1="250" x2="470" y2="520">
        <stop offset="0" stopColor="#6f7c76" />
        <stop offset=".4" stopColor="#9eaaa4" />
        <stop offset=".75" stopColor="#e4eae7" />
        <stop offset="1" stopColor="#f3f5f6" />
      </linearGradient>
      <clipPath id="boreClip">
        <path d="M270 490C270 390 370 240 460 240C510 240 536 285 536 345C536 450 440 583 350 583C300 583 270 550 270 490z" />
      </clipPath>
    </defs>
    <g stroke="#27302d" strokeWidth="3" strokeLinejoin="round">
      <path d="M70 268C115 175 205 52 320 42C350 40 380 50 395 62L498 122C530 128 555 145 575 163L400 300L233 360z" fill="url(#band)" />
      <path d="M142 210C205 115 300 55 395 62z" fill="#84918b" />
      <path d="M142 210L395 62L498 122C400 115 305 195 248 272z" fill="#f3f5f7" />
      <path d="M243 70L265 85M378 150L400 163" />
      <path d="M233 360C285 265 365 165 450 142C500 129 545 138 575 163V460C525 560 440 660 345 684C300 694 260 685 233 660z" fill="#89968f" />
      <path d="M70 268L233 360V660L70 570z" fill="#74817b" />
      <g clipPath="url(#boreClip)">
        <path d="M260 230h290v360H260z" fill="url(#bore)" stroke="none" />
        <path d="M270 350L350 305C338 355 315 395 285 422L260 440z" fill="#d9dcdd" strokeWidth="2" />
        <path d="M380 275C378 355 330 440 265 465v12C340 458 394 365 393 262z" fill="#7c8a83" strokeWidth="2" />
        <path d="M486 235C520 310 498 400 440 478C395 535 340 570 295 564V600H560V230z" fill="url(#lip)" strokeWidth="3" />
        <path d="M494 235C528 312 506 402 446 484C400 538 340 574 295 570" fill="none" strokeWidth="3" />
        <path d="M270 490L400 564" strokeWidth="2" />
      </g>
      <path d="M270 490C270 390 370 240 460 240C510 240 536 285 536 345C536 450 440 583 350 583C300 583 270 550 270 490z" fill="none" />
      {holes.map(([x, y]) => (
        <g key={`${x}-${y}`} transform={`rotate(${x === 402 ? 20 : -20} ${x} ${y})`}>
          <ellipse cx={x} cy={y} rx="11" ry="15" fill="#74817b" />
          <ellipse cx={x + 1} cy={y + 2} rx="7" ry="11" fill="#f5f7f8" stroke="none" />
        </g>
      ))}
    </g>
  </ModelSvg>
);

const Triad = () => (
  <TriadSvg viewBox="0 0 42 54" aria-label="坐标轴">
    <path d="M11 21l12-6 11 6v17l-11 7-12-7z" fill="#c9ccce" stroke="#a5a9aa" />
    <path d="M11 21l12 7 11-7M23 28v17M11 38l12-7 11 7M23 15v16" fill="none" stroke="#b2b6b7" />
    <path d="M11 34l20-13" stroke="#8cb58c" strokeDasharray="2 1" />
    <path d="M10 35V15" stroke="#2038a8" strokeWidth="2" />
    <path d="M7 17l3-6 3 6z" fill="#2038a8" />
    <path d="M11 36l15 9" stroke="#d03030" strokeWidth="2" />
    <path d="M29 48l-7-1 3-4z" fill="#c52727" />
    <circle cx="10" cy="36" r="4" fill="#aeb0b1" />
    <circle cx="9" cy="35" r="2" fill="#eee" />
    <text x="7" y="10" fill="#3152dd">Z</text>
    <text x="30" y="24" fill="#6cab6c">Y</text>
    <text x="29" y="52" fill="#d84141">X</text>
  </TriadSvg>
);

export default function App() {
  return (
    <Page>
      <GlobalStyle />
      <MenuBar>
        <Grip />
        <MenuItems>
          <MenuIcon><Icon name="logo" size={16} /></MenuIcon>
          {menus.map(([text, hotkey]) => <Menu key={text} text={text} hotkey={hotkey} />)}
          <MenuLine>
            <Menu text="帮助" hotkey="H" />
            <WindowControls>
              <WindowButton aria-label="最小化">
                <svg width="10" height="12" aria-hidden="true"><path d="M1 10h8" stroke="#111" strokeWidth="2" /></svg>
              </WindowButton>
              <WindowButton aria-label="还原">
                <svg width="13" height="12" aria-hidden="true"><path d="M4 4V1.500h8v6H9M1 5.500h8v5H1zM1 4.500h8M4 1h8" fill="none" stroke="#111" strokeWidth="1.400" /></svg>
              </WindowButton>
              <WindowButton aria-label="关闭">
                <svg width="10" height="10" aria-hidden="true"><path d="M1 1l8 8M9 1L1 9" stroke="#111" strokeWidth="2" /></svg>
              </WindowButton>
            </WindowControls>
          </MenuLine>
        </MenuItems>
      </MenuBar>

      <ToolRow>
        <Group>
          <Grip />
          <StartTool><Icon name="globe" />启动</StartTool>
          <Drop label="启动选项" />
          <ToolIcon name="fresh" label="新建" />
          <ToolIcon name="open" label="打开" />
          <ToolIcon name="save" label="保存" />
          <ToolIcon name="print" label="打印" />
          <Separator />
          <ToolIcon name="cut" label="剪切" />
          <ToolIcon name="copy" label="复制" />
          <ToolIcon name="paste" label="粘贴" />
          <ToolIcon name="remove" label="删除" />
          <Separator />
          <ToolIcon name="undo" label="撤消" />
          <Drop label="撤消列表" />
          <Separator />
          <ToolIcon name="starHand" label="重复命令" />
          <Drop label="命令列表" />
          <Separator />
          <ToolIcon name="command" label="命令信息" />
          <Separator />
          <SearchBox>
            <SearchInput aria-label="查找命令" defaultValue="查找命令" />
            <svg width="16" height="16" viewBox="0 0 16 16" aria-hidden="true">
              <circle cx="10" cy="6" r="4.500" fill="none" stroke="#4b5251" strokeWidth="1.300" />
              <circle cx="10" cy="6" r="2" fill="none" stroke="#8a9190" />
              <path d="M7 9l-5 5" stroke="#4b5251" strokeWidth="2.500" />
            </svg>
          </SearchBox>
          <Drop label="工具条选项" low />
        </Group>
        <Group $grow>
          <Grip />
          <ToolIcon name="fit" label="适合窗口" />
          <Drop label="视图操作" />
          <ToolIcon name="shell" label="编辑截面" />
          <Drop label="截面选项" />
          <ToolIcon name="cube" label="着色" />
          <Drop label="渲染样式" />
          <More />
        </Group>
        <Group $end>
          <Grip />
          <ToolIcon name="layers" label="图层设置" />
          <More />
        </Group>
      </ToolRow>

      <ToolRow>
        <Group $min={131}>
          <Grip />
          <ToolIcon name="newProgram" label="创建程序" />
          <ToolIcon name="newTool" label="创建刀具" />
          <ToolIcon name="newGeometry" label="创建几何体" />
          <More />
        </Group>
        <Group $min={270}>
          <Grip />
          <ToolIcon name="opEdit" label="编辑对象" />
          <ToolIcon name="opCut" label="剪切对象" />
          <ToolIcon name="opCopy" label="复制对象" />
          <ToolIcon name="opCopy2" label="复制引用" />
          <ToolIcon name="opPaste" label="粘贴对象" />
          <ToolIcon name="opDelete" label="删除对象" />
          <ToolIcon name="opInfo" label="对象信息" />
          <ToolIcon name="opFind" label="显示对象" />
          <Drop label="操作选项" low />
        </Group>
        <Group $grow>
          <Grip />
          <ToolIcon name="generate" label="生成刀轨" />
          <ToolIcon name="replay" label="重播刀轨" />
          <ToolIcon name="verify" label="确认刀轨" />
          <ToolIcon name="post" label="列出刀轨" />
          <ToolIcon name="machine" label="机床仿真" />
          <ToolIcon name="shop" label="后处理" />
          <ToolIcon name="batch" label="车间文档" />
          <Separator />
          <ToolIcon name="simulate" label="同步" />
          <More />
        </Group>
        <Group>
          <Grip />
          <ToolIcon name="flashlight" label="显示刀轨" />
          <More />
        </Group>
        <Group>
          <Grip />
          <ToolIcon name="turning" label="车削截面" />
          <More />
        </Group>
        <Group $end>
          <Grip />
          <ToolIcon name="order" label="程序顺序视图" active />
          <More />
        </Group>
      </ToolRow>

      <ToolRow $last>
        <Group $grow $end>
          <FilterBox $w={133}>
            <FilterSelect aria-label="选择过滤器"><option>没有选择过滤器</option></FilterSelect>
            <Triangle />
          </FilterBox>
          <FilterBox $w={140}>
            <FilterSelect aria-label="选择范围"><option>整个装配</option></FilterSelect>
            <Triangle />
          </FilterBox>
          <Spacer />
          <ToolIcon name="snapGrey" label="常规选择" w={22} />
          <Separator />
          <ToolIcon name="snapBack" label="全不选" w={22} />
          <Tool aria-label="捕捉点" $w={22}><Icon name="snapBox" size={20} /></Tool>
          <Drop label="捕捉选项" />
          <ToolIcon name="moveGrey" label="移动" w={22} />
          <ToolIcon name="treeGrey" label="组件" w={22} />
          <Separator />
          <ToolIcon name="hex" label="中心点" w={23} />
          <ToolIcon name="marquee" label="矩形选择" w={23} />
          <Drop label="选择选项" />
          <Separator />
          <ToolIcon name="wirebody" label="高亮" w={23} />
          <ToolIcon name="iceCube" label="实体" w={23} />
          <ToolIcon name="toolTree" label="导航" w={23} />
        </Group>
        <Drop label="工具条选项" low />
      </ToolRow>

      <Workspace>
        <Viewport>
          <Model />
          <Triad />
        </Viewport>

        <Navigator>
          <NavTitle><DockBox />工序导航器 - 程...</NavTitle>
          <TreePane>
            <ColumnHead>名称</ColumnHead>
            <TreeBody>
              <TreeList>
                <TreeRow><RootLabel>NC_PROGRAM</RootLabel></TreeRow>
                {nodes.map((node, i) => <TreeNode key={i} node={node} />)}
              </TreeList>
              <ScrollV>
                <ScrollButton aria-label="向上滚动"><Chevron d="M1 6.500L4.500 3 8 6.500" /></ScrollButton>
                <Track $column><Thumb $part={65} /></Track>
                <ScrollButton aria-label="向下滚动"><Chevron d="M1 3l3.500 3.500L8 3" /></ScrollButton>
              </ScrollV>
            </TreeBody>
            <ScrollH>
              <ScrollButton aria-label="向左滚动"><Chevron d="M6 1L2.500 4.500 6 8" /></ScrollButton>
              <Track><Thumb $part={22} $dark /></Track>
              <ScrollButton aria-label="向右滚动"><Chevron d="M3 1l3.500 3.500L3 8" /></ScrollButton>
              <ScrollButton as="span" />
            </ScrollH>
          </TreePane>
          <Splitter />
          <Fold>相依性</Fold>
          <Fold>细节</Fold>
          <NavBottom>
            <ScrollH>
              <ScrollButton aria-label="向左滚动"><Chevron d="M6 1L2.500 4.500 6 8" /></ScrollButton>
              <Track><Thumb $part={88} /></Track>
              <ScrollButton aria-label="向右滚动"><Chevron d="M3 1l3.500 3.500L3 8" /></ScrollButton>
            </ScrollH>
          </NavBottom>
        </Navigator>

        <Rail>
          <RailTab aria-label="资源条选项" $top><Icon name="gear" size={18} /></RailTab>
          <RailTab aria-label="装配导航器"><Icon name="assembly" /></RailTab>
          <RailTab aria-label="约束导航器"><Icon name="constraint" /></RailTab>
          <RailTab aria-label="部件导航器"><Icon name="part" /></RailTab>
          <RailTab aria-label="工序导航器" $active><Icon name="operation" /></RailTab>
          <RailTab aria-label="加工特征导航器"><Icon name="gridBox" /></RailTab>
          <RailTab aria-label="机床导航器"><Icon name="mill" /></RailTab>
          <RailTab aria-label="重用库"><Icon name="books" /></RailTab>
          <RailWave viewBox="0 0 28 8" aria-hidden="true">
            <path d="M0 2q7 6 13 3t15-3" fill="none" stroke="#6d726b" strokeWidth="2" />
          </RailWave>
          <RailArrow aria-label="顶部" $bar="bottom"><Triangle $up $faint /><Bar $faint /></RailArrow>
          <RailArrow aria-label="上一个"><Triangle $up $faint /></RailArrow>
          <RailArrow aria-label="下一个"><Triangle /></RailArrow>
          <RailArrow aria-label="底部" $bar="top"><Triangle /><Bar /></RailArrow>
        </Rail>
      </Workspace>

      <BottomBar>
        <BottomGroup $min={147}>
          <Grip />
          <ToolIcon name="progView" label="程序视图" active />
          <ToolIcon name="toolView" label="机床视图" />
          <ToolIcon name="geomView" label="几何视图" />
          <ToolIcon name="methodView" label="加工方法视图" />
          <Drop label="视图选项" low />
        </BottomGroup>
        <BottomGroup>
          <Grip />
          <ToolIcon name="heat" label="分析" />
          <Drop label="分析选项" />
          <ToolIcon name="plus" label="点" />
          <Drop label="点选项" />
          <ToolIcon name="extrude" label="拉伸" />
          <Drop label="拉伸选项" />
          <ToolIcon name="cylinder" label="偏置" />
          <ToolIcon name="splitCube" label="拆分体" />
          <ToolIcon name="mesh" label="网格" />
          <Drop label="网格选项" />
          <Drop label="工具条选项" low />
        </BottomGroup>
      </BottomBar>
    </Page>
  );
}
